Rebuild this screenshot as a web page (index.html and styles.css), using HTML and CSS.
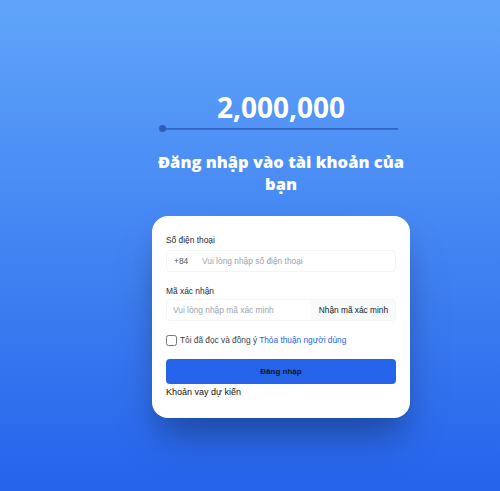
FILE: index.html
```html
<!DOCTYPE html>
<html lang="vi">
<head>
<meta charset="utf-8">
<title>Đăng nhập</title>
<link rel="stylesheet" href="styles.css">
</head>
<body>
<div class="page">
  <div class="col">
    <div class="amount">2,000,000</div>
    <div class="slider"><span class="thumb"></span></div>
    <h1 class="title">Đăng nhập vào tài khoản của bạn</h1>
    <form class="card">
      <label class="label">Số điện thoại</label>
      <div class="field">
        <span class="prefix">+84</span>
        <input class="input" type="text" placeholder="Vui lòng nhập số điện thoại">
      </div>
      <label class="label label-2">Mã xác nhận</label>
      <div class="field field-code">
        <input class="input input-code" type="text" placeholder="Vui lòng nhập mã xác minh">
        <button type="button" class="code-btn">Nhận mã xác minh</button>
      </div>
      <label class="agree">
        <input type="checkbox" class="check">
        <span>Tôi đã đọc và đồng ý <a class="link">Thỏa thuận người dùng</a></span>
      </label>
      <button type="button" class="submit">Đăng nhập</button>
      <div class="note">Khoản vay dự kiến</div>
    </form>
  </div>
</div>
</body>
</html>
```

FILE: styles.css
```css
* { box-sizing: border-box; }
html, body { margin: 0; padding: 0; }
body {
  min-height: 491px;
  background: linear-gradient(to bottom, #60a5fa, #2563eb);
  font-family: "Liberation Sans", Arial, sans-serif;
}
.page {
  display: flex;
  justify-content: center;
  padding: 91px 0 0 62px;
}
.col { width: 258px; }
.amount {
  font-family: "Open Sans", sans-serif;
  font-weight: 700;
  font-size: 28px;
  line-height: 32px;
  color: #fff;
  text-align: center;
}
.slider {
  position: relative;
  margin: 5px 12px 0 8px;
  height: 2px;
  background: #3d6dcc;
  border-top: 1px solid #3566c4;
}
.thumb {
  position: absolute;
  left: -1px;
  top: -4px;
  width: 7px;
  height: 7px;
  border-radius: 50%;
  background: #2f5cb5;
}
.title {
  margin: 21px 0 0;
  font-family: "Open Sans", sans-serif;
  font-weight: 800;
  font-size: 16.5px;
  line-height: 22px;
  color: #fff;
  text-align: center;
}
.card {
  margin: 21px 0 0;
  background: #fff;
  border-radius: 16px;
  padding: 16px 14px 18px;
  box-shadow: 0 20px 25px -5px rgba(0,0,0,.15), 0 25px 50px -12px rgba(0,0,0,.25);
}
.label {
  display: block;
  font-size: 8.4px;
  line-height: 16px;
  color: #1f2937;
}
.label-2 { margin-top: 11px; }
.field {
  display: flex;
  align-items: center;
  height: 22px;
  margin-top: 2px;
  border: 1px solid #f3f4f6;
  border-radius: 4px;
}
.field-code { margin-top: 0; }
.prefix {
  padding: 0 0 0 7px;
  width: 35px;
  font-size: 8.4px;
  color: #4b5563;
}
.input {
  flex: 1;
  min-width: 0;
  border: 0;
  outline: 0;
  background: transparent;
  font-family: inherit;
  font-size: 8.4px;
  color: #111827;
  padding: 0;
}
.input::placeholder { color: #9ca3af; }
.input-code { padding-left: 6px; }
.code-btn {
  height: 100%;
  border: 0;
  border-radius: 0 4px 4px 0;
  background: #f9fafb;
  padding: 0 7px 0 8px;
  font-family: inherit;
  font-size: 8.3px;
  color: #111827;
}
.agree {
  display: flex;
  align-items: center;
  gap: 3px;
  margin-top: 12px;
  height: 14px;
  font-size: 8.3px;
  color: #374151;
}
.check {
  margin: 0;
  width: 11px;
  height: 11px;
}
.link { color: #2563eb; }
.submit {
  display: block;
  width: 100%;
  height: 25px;
  margin-top: 12px;
  border: 0;
  border-radius: 4px;
  background: #2563eb;
  font-family: inherit;
  font-size: 8px;
  font-weight: 700;
  color: #111827;
}
.note {
  font-size: 9px;
  line-height: 16px;
  color: #111;
}
```
